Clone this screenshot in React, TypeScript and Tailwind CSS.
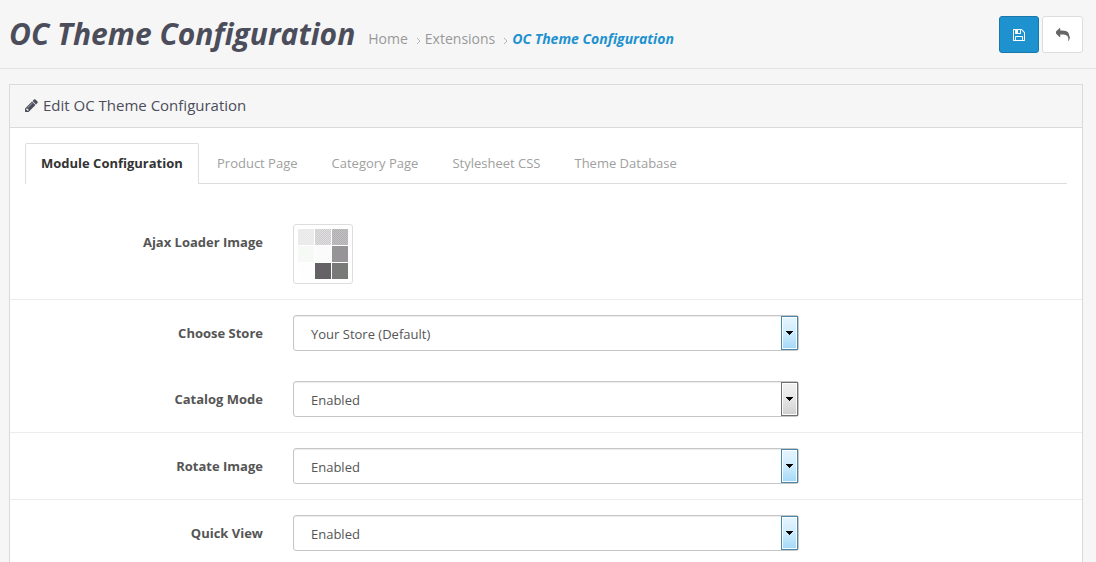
import React from "react";

const font = "font-['Open_Sans','Noto_Sans',sans-serif]";

const PENCIL =
  "M491 1536l91-91-235-235-91 91v107h128v128h107zm523-928q0-22-22-22-10 0-17 7l-542 542q-7 7-7 17 0 22 22 22 10 0 17-7l542-542q7-7 7-17zm-54-192l416 416-832 832h-416v-416zm683 96q0 53-37 90l-166 166-416-416 166-165q36-38 90-38 53 0 91 38l235 234q37 39 37 91z";
const FLOPPY =
  "M512 1536h768v-384h-768v384zm896 0h128v-896q0-14-10-38.5t-20-34.5l-281-281q-10-10-34-20t-39-10v416q0 40-28 68t-68 28h-576q-40 0-68-28t-28-68v-416h-128v1280h128v-416q0-40 28-68t68-28h832q40 0 68 28t28 68v416zm-384-928v-320q0-13-9.5-22.5t-22.5-9.5h-192q-13 0-22.5 9.5t-9.5 22.5v320q0 13 9.5 22.5t22.5 9.5h192q13 0 22.5-9.5t9.5-22.5zm640 32v928q0 40-28 68t-68 28h-1344q-40 0-68-28t-28-68v-1344q0-40 28-68t68-28h928q40 0 88 20t76 48l280 280q28 28 48 76t20 88z";
const REPLY =
  "M1792 1120q0 166-127 451-3 7-10.5 24t-13.5 30-13 22q-12 17-28 17-15 0-23.5-10t-8.5-25q0-9 2.5-26.5t2.5-23.5q5-68 5-123 0-112-19.5-200.5t-54-153.5-89-112-117-77.5-149.5-45.5-175.5-21.5-206-5.5h-224v256q0 26-19 45t-45 19-45-19l-512-512q-19-19-19-45t19-45l512-512q19-19 45-19t45 19 19 45v256h224q713 0 875 403 53 134 53 333z";

function Icon({ d, className }: { d: string; className: string }) {
  return (
    <svg viewBox="0 0 1792 1792" fill="currentColor" className={className} aria-hidden="true">
      <path d={d} />
    </svg>
  );
}

function Chevron() {
  return (
    <svg viewBox="0 0 5 8" className="ml-2 mr-1 mt-[5px] h-[8px] w-[5px]" fill="none" stroke="#b4b4b4" aria-hidden="true">
      <path d="M1 1l3 3-3 3" />
    </svg>
  );
}

function Row({ label, border, children }: { label: string; border?: boolean; children: React.ReactNode }) {
  return (
    <div className={`flex py-[15px] ${border ? "border-t border-[#ededed]" : ""}`}>
      <div className="w-[253px] shrink-0 pt-[9px] text-right text-[13px] leading-[18px] font-bold text-[#555]">
        {label}
      </div>
      <div className="ml-[30px]">{children}</div>
    </div>
  );
}

function Select({ value, tone }: { value: string; tone: "blue" | "gray" }) {
  const toneClass =
    tone === "blue"
      ? "border-[#4a86a8] bg-linear-to-b from-[#e6f5fd] via-[#cfecfc] to-[#a3d8f6]"
      : "border-[#707070] bg-linear-to-b from-[#f2f2f2] via-[#e6e6e6] to-[#cfcfcf]";
  return (
    <button
      type="button"
      className="flex h-9 w-[506px] items-stretch rounded-[3px] border border-[#c6c6c6] bg-white text-left shadow-[inset_0_1px_1px_rgba(0,0,0,0.08)]"
    >
      <span className="flex-1 pt-[9px] pl-[17px] text-[13px] leading-[18px] text-[#555]">{value}</span>
      <span
        className={`flex w-[17px] items-center justify-center border shadow-[inset_0_0_0_1px_rgba(255,255,255,0.9)] ${toneClass}`}
      >
        <svg viewBox="0 0 7 4" className="h-1 w-[7px]" fill="#000" shapeRendering="crispEdges" aria-hidden="true">
          <path d="M0 0h7v1h-1v1h-1v1h-1v1h-1v-1h-1v-1h-1v-1h-1z" />
        </svg>
      </span>
    </button>
  );
}

const TABS = ["Product Page", "Category Page", "Stylesheet CSS", "Theme Database"];

export default function App() {
  return (
    <div className={`h-[562px] w-[1096px] overflow-hidden bg-[#f6f6f6] ${font}`}>
      <header className="flex h-[69px] border-b border-[#e4e4e4] pr-[13px] pl-[9px]">
        <h1 className="pt-[13px] text-[30px] leading-[42px] font-bold whitespace-nowrap text-[#4c4d5a] italic">
          OC Theme Configuration
        </h1>
        <nav className="mt-[28px] ml-[13px] flex h-5 items-center text-[14px] whitespace-nowrap text-[#999]">
          <span>Home</span>
          <Chevron />
          <span>Extensions</span>
          <Chevron />
          <span className="font-bold text-[#1e91cf] italic">OC Theme Configuration</span>
        </nav>
        <div className="ml-auto flex gap-[3px] pt-4">
          <button
            type="button"
            aria-label="Save"
            className="flex h-[37px] w-10 items-center justify-center rounded-[3px] border border-[#1978ab] bg-[#1e91cf] text-white"
          >
            <Icon d={FLOPPY} className="h-[14px] w-[14px]" />
          </button>
          <button
            type="button"
            aria-label="Back"
            className="flex h-[37px] w-[41px] items-center justify-center rounded-[3px] border border-[#ddd] bg-white text-[#666]"
          >
            <Icon d={REPLY} className="h-[14px] w-[14px]" />
          </button>
        </div>
      </header>

      <main className="mt-[15px] mr-[13px] ml-[9px] h-[600px] border border-[#dadada] bg-white">
        <div className="flex h-[43px] items-center border-b border-[#dadada] bg-[#f6f6f6] pb-[2px] pl-[14px] text-[#4c4d5a]">
          <Icon d={PENCIL} className="mr-1 h-[15px] w-[15px]" />
          <h2 className="text-[15px] leading-5">Edit OC Theme Configuration</h2>
        </div>

        <div className="mx-[15px] mt-[15px] flex h-[41px] border-b border-[#ddd] text-[13px] leading-[18px] whitespace-nowrap text-[#a0a0a0]">
          <div className="h-[41px] w-[174px] rounded-t-[2px] border border-b-0 border-[#ddd] bg-white pt-[10px] pl-[15px] font-bold text-[#333]">
            Module Configuration
          </div>
          <div className="flex gap-[34px] pt-[11px] pl-[18px]">
            {TABS.map((t) => (
              <span key={t}>{t}</span>
            ))}
          </div>
        </div>

        <div className="pt-[25px]">
          <Row label="Ajax Loader Image">
            <div className="grid h-[60px] w-[60px] grid-cols-[16px_16px_16px] grid-rows-[16px_16px_16px] gap-px rounded-[3px] border border-[#ddd] bg-white p-1">
              <i className="bg-[repeating-conic-gradient(#e8e8e8_0_25%,#eeeeee_0_50%)] bg-[length:2px_2px]" />
              <i className="bg-[repeating-conic-gradient(#cecbce_0_25%,#e0dfe0_0_50%)] bg-[length:2px_2px]" />
              <i className="bg-[repeating-conic-gradient(#b2afb2_0_25%,#c2c0c2_0_50%)] bg-[length:2px_2px]" />
              <i className="bg-[#f7f9f7]" />
              <i className="bg-[#fafbfa]" />
              <i className="bg-[#979497]" />
              <i className="bg-[#fdfefd]" />
              <i className="bg-[#646264]" />
              <i className="bg-[#787a78]" />
            </div>
          </Row>
          <Row label="Choose Store" border>
            <Select value="Your Store (Default)" tone="blue" />
          </Row>
          <Row label="Catalog Mode">
            <Select value="Enabled" tone="gray" />
          </Row>
          <Row label="Rotate Image" border>
            <Select value="Enabled" tone="blue" />
          </Row>
          <Row label="Quick View" border>
            <Select value="Enabled" tone="blue" />
          </Row>
        </div>
      </main>
    </div>
  );
}
